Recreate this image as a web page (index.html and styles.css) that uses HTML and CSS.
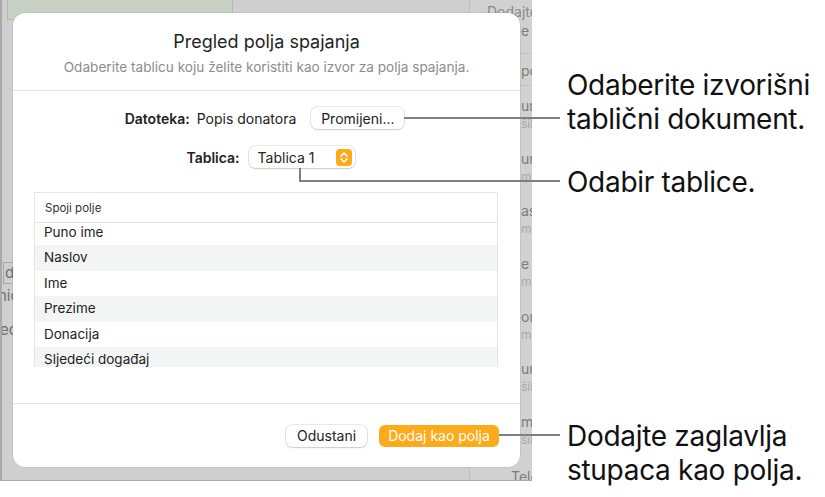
FILE: index.html
```html
<!DOCTYPE html>
<html lang="hr">
<head>
    <meta charset="UTF-8">
    <title>Pregled polja spajanja</title>
    <link rel="stylesheet" href="styles.css">
</head>
<body>
    <div class="page">
        <div class="backdrop">
            <div class="doc">
                <div class="sel"></div>
                <div class="doc-bits">
                    <span class="bit boxed">d</span>
                    <span class="bit bit-nic">nic</span>
                    <span class="bit bit-ec">ec</span>
                </div>
            </div>
            <div class="side">
                <div class="side-head">
                    <span class="side-line side-top">Dodajte</span>
                    <span class="side-line">e</span>
                </div>
                <div class="side-sub"><span class="side-line">polj</span></div>
                <div class="side-item"><span class="side-line">un</span><span class="side-line dim">šil</span></div>
                <div class="side-item"><span class="side-line">un</span><span class="side-line dim">m</span></div>
                <div class="side-item"><span class="side-line">as</span><span class="side-line dim">m</span></div>
                <div class="side-item"><span class="side-line">e</span><span class="side-line dim">m</span></div>
                <div class="side-item"><span class="side-line">on</span><span class="side-line dim">m</span></div>
                <div class="side-item"><span class="side-line">un</span><span class="side-line dim">šil</span></div>
                <div class="side-item"><span class="side-line">m</span><span class="side-line dim">šil</span></div>
                <div class="side-item side-last"><span class="side-line side-tele">Tele</span></div>
            </div>

            <!-- Merge field dialog -->
            <div class="dialog">
                <div class="dlg-head">
                    <h1 class="dlg-title">Pregled polja spajanja</h1>
                    <p class="dlg-sub">Odaberite tablicu koju želite koristiti kao izvor za polja spajanja.</p>
                </div>
                <div class="dlg-body">
                    <div class="field field-file">
                        <span class="lbl">Datoteka:</span>
                        <span class="val">Popis donatora</span>
                        <button class="btn btn-change">Promijeni...</button>
                    </div>
                    <div class="field field-table">
                        <span class="lbl">Tablica:</span>
                        <div class="popup">
                            <span>Tablica 1</span>
                            <span class="stepper">
                                <svg width="16" height="17" viewBox="0 0 16 17">
                                    <polyline points="5,7 8,4 11,7" fill="none" stroke="#fff" stroke-width="1.6" stroke-linecap="round" stroke-linejoin="round"/>
                                    <polyline points="5,10 8,13 11,10" fill="none" stroke="#fff" stroke-width="1.6" stroke-linecap="round" stroke-linejoin="round"/>
                                </svg>
                            </span>
                        </div>
                    </div>
                    <div class="table">
                        <div class="table-head">Spoji polje</div>
                        <div class="table-rows">
                            <div class="row first">Puno ime</div>
                            <div class="row alt">Naslov</div>
                            <div class="row">Ime</div>
                            <div class="row alt">Prezime</div>
                            <div class="row">Donacija</div>
                            <div class="row alt">Sljedeći događaj</div>
                        </div>
                    </div>
                </div>
                <div class="dlg-foot">
                    <button class="btn btn-cancel">Odustani</button>
                    <button class="btn btn-add">Dodaj kao polja</button>
                </div>
            </div>
        </div>

        <div class="notes">
            <p class="note note-file">Odaberite izvorišni<br>tablični dokument.</p>
            <p class="note note-table">Odabir tablice.</p>
            <p class="note note-add">Dodajte zaglavlja<br>stupaca kao polja.</p>
        </div>

        <!-- callout leader lines -->
        <div class="lead lead-file"></div>
        <div class="lead lead-table-v"></div>
        <div class="lead lead-table-h"></div>
        <div class="lead lead-add"></div>
    </div>
</body>
</html>
```

FILE: styles.css
```css
body {
    margin: 0;
    background: #fff;
    font-family: Inter, "Noto Sans", sans-serif;
    color: #222;
}
.page {
    position: relative;
    display: flex;
    width: 825px;
    height: 497px;
    overflow: hidden;
}
.backdrop {
    position: relative;
    display: flex;
    width: 530px;
    height: 480px;
    background: #cfcfcf;
    border-left: 2px solid #a9a9a9;
    border-bottom: 1px solid #a9a9a9;
    overflow: hidden;
}
.doc {
    flex: 1;
}
.sel {
    margin-left: 5px;
    width: 224px;
    height: 19px;
    background: #c6d1c3;
    border: 1px solid #a7c2a1;
    border-top: 0;
}
.doc-bits {
    display: flex;
    flex-direction: column;
    align-items: flex-start;
    margin-top: 242px;
    font-size: 15px;
    color: #6f6f6f;
}
.bit {
    line-height: 20px;
}
.boxed {
    margin-left: 1px;
    width: 40px;
    padding-left: 1px;
    border: 1px solid #a2a5c6;
}
.bit-nic {
    margin-top: 2px;
    margin-left: -4px;
}
.bit-ec {
    margin-top: 14px;
    margin-left: -2px;
}
.side {
    width: 62px;
    border-left: 1px solid #bdbdbd;
    background: #d1d1d1;
}
.side-line {
    display: block;
    white-space: nowrap;
    padding-left: 51px;
    font-size: 14px;
    line-height: 18px;
    color: #7c7c7c;
}
.side-line.dim {
    font-size: 12px;
    color: #a9a9a9;
}
.side-head {
    height: 54px;
    padding-top: 3px;
    box-sizing: border-box;
    border-bottom: 1px solid #c3c3c3;
}
.side-head .side-top {
    padding-left: 17px;
    color: #8a8a8a;
}
.side-head .side-line + .side-line {
    margin-top: 1px;
}
.side-sub {
    height: 32px;
    padding-top: 8px;
    box-sizing: border-box;
    border-bottom: 1px solid #c3c3c3;
}
.side-item {
    height: 52.7px;
    padding-top: 11px;
    box-sizing: border-box;
}
.side-last {
    padding-top: 13px;
}
.side-tele {
    padding-left: 41px;
}
.dialog {
    position: absolute;
    left: 11px;
    top: 13px;
    width: 507px;
    height: 454px;
    display: flex;
    flex-direction: column;
    background: #fff;
    border-radius: 12px;
    box-shadow: 0 0 0 0.5px rgba(0, 0, 0, 0.12);
}
.dlg-head {
    padding: 18px 20px 15px;
    text-align: center;
    border-bottom: 1px solid #e4e4e4;
}
.dlg-title {
    margin: 0;
    font-size: 18px;
    font-weight: 400;
    line-height: 22px;
    color: #1f1f1f;
}
.dlg-sub {
    margin: 6px 0 0;
    font-size: 13.6px;
    line-height: 16px;
    color: #8c8c8c;
}
.dlg-body {
    flex: 1;
    display: flex;
    flex-direction: column;
    padding: 16px 22px 0 21px;
}
.field {
    display: flex;
    align-items: center;
    justify-content: center;
    height: 22px;
    font-size: 14px;
}
.field-file {
    padding-right: 3px;
}
.field-table {
    margin-top: 17px;
    padding-left: 9px;
}
.lbl {
    font-weight: 600;
    margin-right: 7px;
}
.field-table .lbl {
    margin-right: 9px;
}
.btn {
    height: 22px;
    padding: 0;
    font-family: inherit;
    font-size: 14px;
    color: #222;
    background: #fff;
    border: 0;
    border-radius: 6px;
    box-shadow: 0 0 0 0.5px rgba(0, 0, 0, 0.18), 0 1px 1.5px rgba(0, 0, 0, 0.12);
}
.btn-change {
    width: 93px;
    margin-left: 15px;
}
.popup {
    display: flex;
    align-items: center;
    justify-content: space-between;
    width: 106px;
    height: 22px;
    padding: 0 3px 0 9px;
    box-sizing: border-box;
    border-radius: 6px;
    box-shadow: 0 0 0 0.5px rgba(0, 0, 0, 0.18), 0 1px 1.5px rgba(0, 0, 0, 0.12);
}
.stepper {
    display: flex;
    width: 16px;
    height: 17px;
    background: #fdaa1b;
    border-radius: 4px;
}
.table {
    margin-top: 24px;
    height: 175px;
    box-sizing: border-box;
    border: 1px solid #e6e6e6;
}
.table-head {
    height: 29px;
    line-height: 31px;
    padding-left: 10px;
    font-size: 11.5px;
    color: #333;
    border-bottom: 1px solid #e2e2e2;
}
.table-rows {
    height: 144px;
    overflow: hidden;
}
.row {
    height: 25.5px;
    line-height: 25.5px;
    padding-left: 9px;
    font-size: 13.5px;
}
.row.first {
    margin-top: -3.5px;
}
.row.alt {
    background: #f3f4f4;
}
.dlg-foot {
    display: flex;
    align-items: center;
    justify-content: flex-end;
    gap: 12px;
    height: 63px;
    padding-right: 21px;
    border-top: 1px solid #e4e4e4;
}
.btn-cancel {
    width: 81px;
}
.btn-add {
    width: 120px;
    color: #fff;
    background: #fdaa1b;
    box-shadow: none;
}
.notes {
    margin-left: 35px;
    padding-top: 68px;
}
.note {
    margin: 0;
    font-size: 28px;
    line-height: 34px;
    letter-spacing: -0.3px;
    color: #111;
    white-space: nowrap;
}
.note-table {
    margin-top: 29px;
}
.note-add {
    margin-top: 220px;
}
.lead {
    position: absolute;
    background: #7f7f7f;
}
.lead-file {
    left: 404px;
    top: 117px;
    width: 156px;
    height: 2px;
}
.lead-table-v {
    left: 299px;
    top: 168px;
    width: 2px;
    height: 14px;
}
.lead-table-h {
    left: 299px;
    top: 180px;
    width: 261px;
    height: 2px;
}
.lead-add {
    left: 499px;
    top: 434px;
    width: 61px;
    height: 2px;
}
```
